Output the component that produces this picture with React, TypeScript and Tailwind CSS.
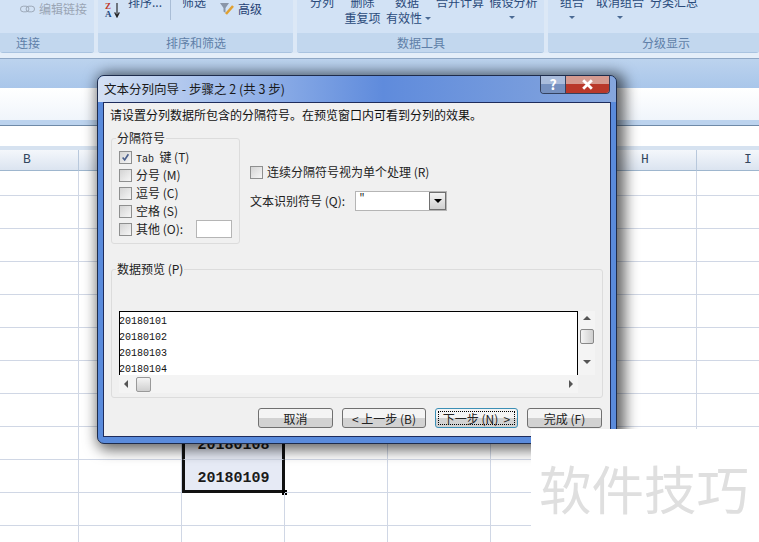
import React from "react";

const columns = ["B", "C", "D", "E", "F", "G", "H", "I"];
const rows = [25, 33, 33, 33, 33, 33, 33, 33, 33, 33, 33, 33];
const cjk = "font-['Noto_Sans_CJK_SC','Liberation_Sans',sans-serif]";
const mono = "font-['Liberation_Mono','Noto_Sans_CJK_SC',monospace]";

const RibbonGroup = ({
  width,
  label,
  labelPad,
  children,
}: {
  width: string;
  label: string;
  labelPad: string;
  children?: React.ReactNode;
}) => (
  <div className={`${width} h-[53px] shrink-0 flex flex-col rounded-b-[3px] border-b border-[#a9c3e0] bg-[#d2e2f5]`}>
    <div className="h-[33px] overflow-hidden flex text-[12px] leading-[16px] text-[#2a4a7a]">{children}</div>
    <div className={`h-[19px] bg-[#c2d7ee] text-[12px] leading-[19px] text-[#5f7fa8] ${labelPad}`}>{label}</div>
  </div>
);

const Caret = ({ className = "" }: { className?: string }) => (
  <span className={`block w-0 h-0 border-x-[3px] border-x-transparent border-t-[3px] border-t-[#4a6a94] ${className}`} />
);

const Check = ({ checked = false }: { checked?: boolean }) => (
  <span className="w-[13px] h-[13px] shrink-0 border border-[#8e8f8f] bg-gradient-to-br from-[#d4d4d4] to-[#f6f6f6] p-[1px] flex">
    {checked && (
      <svg viewBox="0 0 11 11" className="w-full h-full">
        <path d="M2 5.5 L4.5 8.5 L9 1.5" fill="none" stroke="#4a5f8c" strokeWidth="2" />
      </svg>
    )}
  </span>
);

const Option = ({ label, checked }: { label: React.ReactNode; checked?: boolean }) => (
  <div className="h-[18px] flex items-center gap-[4px] text-[12px] text-[#222]">
    <Check checked={checked} />
    <span className="whitespace-pre">{label}</span>
  </div>
);

const Button = ({ width, children, isDefault }: { width: string; children: React.ReactNode; isDefault?: boolean }) => (
  <div
    className={`${width} h-[20px] shrink-0 rounded-[3px] border bg-gradient-to-b from-[#f4f4f4] from-50% to-[#d2d2d2] to-50% p-[2px] text-[12px] leading-[14px] text-[#222] text-center ${
      isDefault ? "border-[#3c8fb5]" : "border-[#707070]"
    }`}
  >
    <div className={`h-full border border-dotted ${isDefault ? "border-black" : "border-transparent"} whitespace-pre`}>{children}</div>
  </div>
);

const Arrow = ({ dir }: { dir: "up" | "down" | "left" | "right" }) => {
  const shapes = {
    up: "border-x-[4px] border-x-transparent border-b-[4px] border-b-[#555]",
    down: "border-x-[4px] border-x-transparent border-t-[4px] border-t-[#555]",
    left: "border-y-[4px] border-y-transparent border-r-[4px] border-r-[#555]",
    right: "border-y-[4px] border-y-transparent border-l-[4px] border-l-[#555]",
  };
  return <span className={`block w-0 h-0 ${shapes[dir]}`} />;
};

const Sheet = () => (
  <div className="-ml-[24px]">
    <div className="flex h-[21px]">
      {columns.map((c) => (
        <div
          key={c}
          className={`w-[103px] shrink-0 border-r border-b border-r-[#b8c8dc] border-b-[#9eb6ce] bg-gradient-to-b from-[#f4f7fb] to-[#dbe4f0] text-center text-[13px] leading-[20px] text-[#33465e] ${mono}`}
        >
          {c}
        </div>
      ))}
    </div>
    {rows.map((h, r) => (
      <div key={r} className={`flex ${h === 25 ? "h-[25px]" : "h-[33px]"}`}>
        {columns.map((c) => {
          const selected = c === "D" && r >= 8 && r <= 9;
          const text = selected ? (r === 8 ? "20180108" : "20180109") : "";
          return (
            <div
              key={c}
              className={`relative w-[103px] shrink-0 text-center text-[15px] font-bold leading-[38px] text-[#1a1a1a] ${mono} ${
                selected
                  ? `bg-[#e6eaf5] border-x-[3px] border-x-[#111] ${r === 9 ? "border-b-[3px] border-b-[#111]" : "border-b border-b-[#d0d7e5]"}`
                  : "border-r border-b border-[#d0d7e5]"
              }`}
            >
              {text}
              {selected && r === 9 && (
                <span className="absolute -right-[5px] -bottom-[5px] w-[5px] h-[5px] bg-black" />
              )}
            </div>
          );
        })}
      </div>
    ))}
  </div>
);

const Dialog = () => (
  <div className={`absolute left-[97px] top-[75px] w-[520px] h-[369px] rounded-[7px] overflow-visible border border-[#1e2c4c] bg-[#5a8bdc] shadow-[4px_2px_14px_4px_rgba(0,0,0,0.6)] ${cjk}`}>
    <div className="h-[26px] flex items-start pl-[6px] rounded-t-[6px] bg-gradient-to-r from-[#d5e1f4] via-[#5f8bdc] via-55% to-[#86a6dd]">
      <span className="text-[12.5px] leading-[26px] text-[#1a1a1a] whitespace-pre">文本分列向导 - 步骤之 2 (共 3 步)</span>
      <div className="ml-auto mr-[6px] flex h-[18px] rounded-b-[4px] overflow-hidden border border-t-0 border-[#33415f]">
        <div className="w-[25px] border-r border-[#33415f] bg-gradient-to-b from-[#a9bcdc] from-50% to-[#7590bf] to-50% text-center text-[14px] font-bold leading-[17px] text-white">?</div>
        <div className="w-[43px] flex items-center justify-center bg-gradient-to-b from-[#d59a90] from-45% to-[#b9382a] to-45%">
          <svg viewBox="0 0 12 10" className="w-[13px] h-[11px]">
            <path d="M2 1 L10 9 M10 1 L2 9" stroke="#fff" strokeWidth="2.6" />
          </svg>
        </div>
      </div>
    </div>
    <div className="mx-[5px] h-[335px] border border-[#1e2c5c] bg-[#f0f0f0] pt-[4px] pl-[7px] pr-[7px]">
      <p className="-ml-[1px] text-[12px] leading-[16px] text-[#111] whitespace-pre">请设置分列数据所包含的分隔符号。在预览窗口内可看到分列的效果。</p>
      <div className="flex mt-[10px]">
        <fieldset className="w-[129px] h-[112px] shrink-0 rounded-[3px] border border-[#dcdcdc] pl-[7px] -mt-[1px]">
          <legend className="-ml-[3px] px-[1px] text-[12px] leading-[12px] text-[#222]">分隔符号</legend>
          <div className="mt-[4px]">
            <Option checked label={<><span className={`${mono} text-[10px]`}>Tab</span>  键 (T)</>} />
            <Option label="分号 (M)" />
            <Option label="逗号 (C)" />
            <Option label="空格 (S)" />
            <div className="flex items-center">
              <Option label="其他 (O):" />
              <span className="ml-[13px] w-[36px] h-[18px] border border-[#b5b5b5] bg-white" />
            </div>
          </div>
        </fieldset>
        <div className="ml-[10px] pt-[30px]">
          <Option label="连续分隔符号视为单个处理 (R)" />
          <div className="flex items-center mt-[10px] h-[19px] text-[12px] text-[#222]">
            <span className="w-[105px] whitespace-pre">文本识别符号 (Q):</span>
            <div className="w-[92px] h-[20px] flex border border-[#b5b5b5] bg-white">
              <span className={`flex-1 pl-[3px] text-[10px] leading-[14px] ${mono}`}>"</span>
              <div className="w-[17px] flex items-center justify-center border border-[#707070] bg-gradient-to-b from-[#f4f4f4] to-[#d0d0d0]">
                <span className="block w-0 h-0 border-x-[4px] border-x-transparent border-t-[4px] border-t-black" />
              </div>
            </div>
          </div>
        </div>
      </div>
      <fieldset className="mt-[19px] w-[492px] h-[135px] rounded-[3px] border border-[#dcdcdc] pl-[7px]">
        <legend className="-ml-[3px] px-[1px] text-[12px] leading-[12px] text-[#222]">数据预览 (P)</legend>
        <div className="mt-[36px] flex">
          <div className="w-[459px] h-[64px] overflow-hidden border border-b-0 border-black bg-white">
            {["20180101", "20180102", "20180103", "20180104"].map((v) => (
              <div key={v} className={`-ml-[1px] h-[16px] text-[10px] leading-[20px] text-[#111] ${mono}`}>
                {v}
              </div>
            ))}
          </div>
          <div className="w-[17px] h-[64px] flex flex-col items-center bg-[#f4f4f4] pt-[5px]">
            <Arrow dir="up" />
            <span className="mt-[9px] w-[14px] h-[15px] rounded-[2px] border border-[#888] bg-gradient-to-r from-[#f4f4f4] to-[#cfcfcf]" />
            <span className="mt-[16px]">
              <Arrow dir="down" />
            </span>
          </div>
        </div>
        <div className="w-[459px] h-[18px] flex items-center bg-[#f4f4f4] pl-[5px] pr-[5px]">
          <Arrow dir="left" />
          <span className="ml-[8px] w-[15px] h-[15px] rounded-[2px] border border-[#999] bg-gradient-to-b from-[#f4f4f4] to-[#cfcfcf]" />
          <span className="ml-auto">
            <Arrow dir="right" />
          </span>
        </div>
      </fieldset>
      <div className="mt-[10px] pl-[147px] flex gap-[9px]">
        <Button width="w-[75px]">取消</Button>
        <Button width="w-[84px]">&lt; 上一步 (B)</Button>
        <Button width="w-[83px]" isDefault>下一步 (N)  &gt;</Button>
        <Button width="w-[75px]">完成 (F)</Button>
      </div>
    </div>
  </div>
);

const App = () => {
  return (
    <div className={`relative w-[759px] h-[542px] overflow-hidden bg-white ${cjk}`}>
      {/* ribbon */}
      <div className="flex gap-[4px] h-[53px] bg-[#dce8f6]">
        <RibbonGroup width="w-[94px]" label="连接" labelPad="pl-[16px]">
          <div className="pl-[20px] pt-[1px] flex items-center h-[16px] text-[#9aa5b4]">
            <svg viewBox="0 0 16 8" className="w-[15px] h-[8px] mr-[4px]">
              <rect x="0.5" y="1" width="9" height="6" rx="3" fill="none" stroke="#9aa5b4" />
              <rect x="6.5" y="1" width="9" height="6" rx="3" fill="none" stroke="#9aa5b4" />
            </svg>
            编辑链接
          </div>
        </RibbonGroup>
        <RibbonGroup width="w-[195px]" label="排序和筛选" labelPad="pl-[68px]">
          <div className="pl-[7px] flex">
            <div className="w-[23px] mt-[2px] relative">
              <span className="block text-[9px] leading-[8px] font-bold font-['Liberation_Serif',serif] text-[#c0392b]">Z</span>
              <span className="block text-[9px] leading-[8px] font-bold font-['Liberation_Serif',serif] text-[#234a80]">A</span>
              <svg viewBox="0 0 6 16" className="absolute left-[9px] top-[1px] w-[6px] h-[15px]">
                <path d="M3 0 V14 M0.5 10 L3 15 L5.5 10" fill="none" stroke="#222" strokeWidth="1.2" />
              </svg>
            </div>
            <span className="-mt-[6px] text-[12px]">排序...</span>
            <span className="ml-[8px] w-px h-[20px] bg-[#a9bdd6]" />
            <span className="ml-[11px] -mt-[6px]">筛选</span>
            <svg viewBox="0 0 16 14" className="ml-[13px] mt-[2px] w-[16px] h-[14px]">
              <path d="M1 1 H10 L6.5 6 V11 L4.5 9.5 V6 Z" fill="#8a96a8" />
              <path d="M7 12 L14 4" stroke="#e0a030" strokeWidth="2.5" />
            </svg>
            <span className="ml-[3px] pt-[1px] text-[#1f3f73]">高级</span>
          </div>
        </RibbonGroup>
        <RibbonGroup width="w-[247px]" label="数据工具" labelPad="pl-[100px]">
          <div className="flex -mt-[6px] pl-[13px]">
            <span className="w-[33px]">分列</span>
            <div className="w-[41px] text-center leading-[16px] -ml-[1px]">
              <div>删除</div>
              <div>重复项</div>
            </div>
            <div className="ml-[3px] w-[50px] leading-[16px]">
              <div className="pl-[9px]">数据</div>
              <div className="flex items-center gap-[3px] whitespace-pre">
                有效性
                <Caret />
              </div>
            </div>
            <div className="flex flex-col">
              <div className="whitespace-pre">合并计算  假设分析</div>
              <div className="pl-[73px] pt-[6px]">
                <Caret />
              </div>
            </div>
          </div>
        </RibbonGroup>
        <RibbonGroup width="w-[211px]" label="分级显示" labelPad="pl-[94px]">
          <div className="flex -mt-[6px] pl-[12px]">
            <div className="w-[36px]">
              组合
              <Caret className="ml-[9px] mt-[6px]" />
            </div>
            <div className="w-[54px]">
              <span className="whitespace-pre">取消组合</span>
              <Caret className="ml-[21px] mt-[6px]" />
            </div>
            <span className="whitespace-pre">分类汇总</span>
          </div>
        </RibbonGroup>
      </div>
      {/* bands */}
      <div className="h-[6px] bg-[#e4eef9] border-b border-[#8fa8c6]" />
      <div className="h-[29px] bg-gradient-to-b from-[#bcd3ee] to-[#a9c6ea]" />
      <div className="h-[32px] bg-gradient-to-b from-white to-[#f0f5fb]" />
      <div className="h-[6px] bg-[#bcd3ee] border-b border-[#6f8aa8]" />
      <div className="h-[20px] bg-white" />
      <div className="h-[4px] bg-[#d6e2f0]" />
      <Sheet />
      <Dialog />
      {/* watermark */}
      <div className="absolute left-[531px] top-[429px] w-[228px] h-[113px] bg-white pl-[8px] pt-[28px] text-[52.5px] leading-[60px] whitespace-nowrap text-[#dfdfdf]">
        软件技巧
      </div>
    </div>
  );
};

export default App;
